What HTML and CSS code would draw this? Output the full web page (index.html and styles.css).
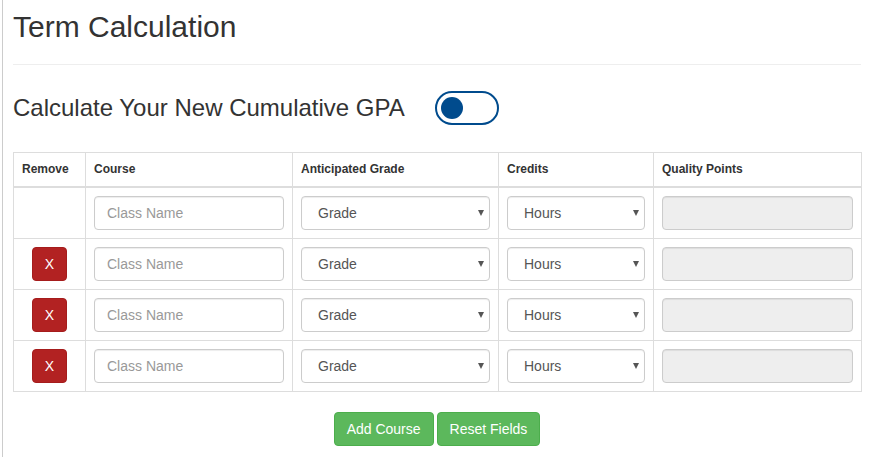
FILE: index.html
```html
<!DOCTYPE html>
<html lang="en">
<head>
<meta charset="utf-8">
<title>Term Calculation</title>
<link rel="stylesheet" href="styles.css">
</head>
<body>
<div class="page">
  <h2 class="title">Term Calculation</h2>
  <hr class="rule">
  <div class="gpa-row">
    <h3 class="gpa-label">Calculate Your New Cumulative GPA</h3>
    <span class="toggle"><span class="knob"></span></span>
  </div>
  <table class="calc">
    <colgroup>
      <col class="c-remove"><col class="c-course"><col class="c-grade"><col class="c-credits"><col class="c-qp">
    </colgroup>
    <thead>
      <tr><th>Remove</th><th>Course</th><th>Anticipated Grade</th><th>Credits</th><th>Quality Points</th></tr>
    </thead>
    <tbody>
      <tr>
        <td></td>
        <td><input class="field" type="text" placeholder="Class Name"></td>
        <td><div class="sel"><select class="field select"><option>Grade</option></select></div></td>
        <td><div class="sel"><select class="field select"><option>Hours</option></select></div></td>
        <td><input class="field readonly" type="text" readonly></td>
      </tr>
      <tr>
        <td class="rm"><button class="btn-x">X</button></td>
        <td><input class="field" type="text" placeholder="Class Name"></td>
        <td><div class="sel"><select class="field select"><option>Grade</option></select></div></td>
        <td><div class="sel"><select class="field select"><option>Hours</option></select></div></td>
        <td><input class="field readonly" type="text" readonly></td>
      </tr>
      <tr>
        <td class="rm"><button class="btn-x">X</button></td>
        <td><input class="field" type="text" placeholder="Class Name"></td>
        <td><div class="sel"><select class="field select"><option>Grade</option></select></div></td>
        <td><div class="sel"><select class="field select"><option>Hours</option></select></div></td>
        <td><input class="field readonly" type="text" readonly></td>
      </tr>
      <tr>
        <td class="rm"><button class="btn-x">X</button></td>
        <td><input class="field" type="text" placeholder="Class Name"></td>
        <td><div class="sel"><select class="field select"><option>Grade</option></select></div></td>
        <td><div class="sel"><select class="field select"><option>Hours</option></select></div></td>
        <td><input class="field readonly" type="text" readonly></td>
      </tr>
    </tbody>
  </table>
  <div class="actions">
    <button class="btn-green">Add Course</button>
    <button class="btn-green">Reset Fields</button>
  </div>
</div>
</body>
</html>
```

FILE: styles.css
```css
* { box-sizing: border-box; }
html, body { margin: 0; padding: 0; background: #fff; }
body {
  font-family: "Liberation Sans", Arial, sans-serif;
  color: #333;
  font-size: 14px;
}
.page {
  margin-left: 2px;
  border-left: 1px solid #ccc;
  padding: 10px 10px 20px 10px;
  min-height: 457px;
}
.title {
  margin: 0;
  font-size: 30px;
  line-height: 33px;
  font-weight: normal;
  color: #333;
}
.rule {
  margin: 21px 0 0 0;
  border: 0;
  border-top: 1px solid #eee;
}
.gpa-row {
  display: flex;
  align-items: center;
  margin-top: 26px;
  height: 34px;
}
.gpa-label {
  margin: 0;
  font-size: 24px;
  font-weight: normal;
  color: #333;
}
.toggle {
  margin-left: 30px;
  width: 64px;
  height: 34px;
  border: 2px solid #004b8d;
  border-radius: 17px;
  display: flex;
  align-items: center;
  padding-left: 4px;
}
.knob {
  width: 22px;
  height: 22px;
  border-radius: 50%;
  background: #004b8d;
}
.calc {
  margin-top: 27px;
  width: 848px;
  border-collapse: collapse;
  table-layout: fixed;
  border: 1px solid #ddd;
}
.c-remove { width: 72px; }
.c-course { width: 207px; }
.c-grade { width: 206px; }
.c-credits { width: 155px; }
.c-qp { width: 208px; }
.calc th {
  text-align: left;
  font-size: 12px;
  font-weight: bold;
  line-height: 17px;
  padding: 8px;
  border: 1px solid #ddd;
  border-bottom: 2px solid #ddd;
  vertical-align: bottom;
  color: #333;
}
.calc td {
  padding: 8px;
  border: 1px solid #ddd;
  vertical-align: top;
  height: 50px;
}
.calc td.rm { text-align: center; }
.field {
  display: block;
  width: 100%;
  height: 34px;
  padding: 6px 12px;
  font-family: "Liberation Sans", Arial, sans-serif;
  font-size: 14px;
  color: #555;
  background: #fff;
  border: 1px solid #ccc;
  border-radius: 4px;
  box-shadow: inset 0 1px 1px rgba(0,0,0,0.075);
  outline: none;
}
.field::placeholder { color: #999; }
.readonly { background: #eee; }
.sel { position: relative; }
.select {
  -webkit-appearance: none;
  appearance: none;
  padding-left: 16px;
}
.sel::after {
  content: "";
  position: absolute;
  right: 6px;
  top: 14px;
  border-left: 3.5px solid transparent;
  border-right: 3.5px solid transparent;
  border-top: 6px solid #555;
  pointer-events: none;
}
.btn-x {
  width: 35px;
  height: 34px;
  border: 1px solid #a51c1c;
  border-radius: 4px;
  background: #b22222;
  color: #fff;
  font-family: "Liberation Sans", Arial, sans-serif;
  font-size: 14px;
  padding: 0;
}
.actions {
  display: flex;
  justify-content: center;
  gap: 3px;
  margin-top: 20px;
}
.btn-green {
  height: 34px;
  padding: 6px 12px;
  font-family: "Liberation Sans", Arial, sans-serif;
  font-size: 14px;
  color: #fff;
  background: #5cb85c;
  border: 1px solid #4cae4c;
  border-radius: 4px;
}
```
